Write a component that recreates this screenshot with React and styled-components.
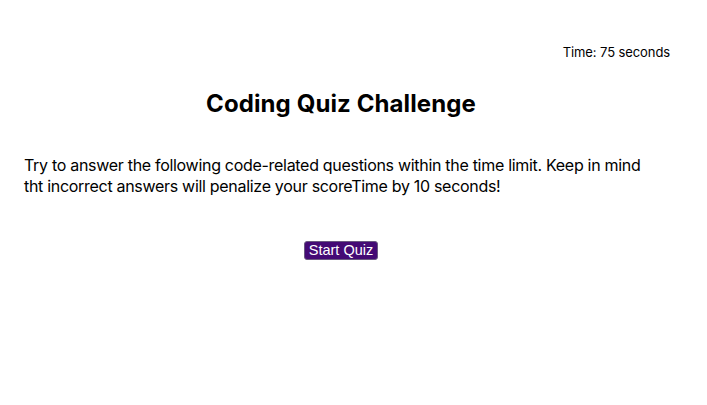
import styled, { createGlobalStyle } from 'styled-components';

const GlobalStyle = createGlobalStyle`
  body {
    margin: 0;
    background: #ffffff;
    font-family: Inter, "Noto Sans", sans-serif;
    color: #000000;
  }
`;

const Page = styled.div`
  display: flex;
  flex-direction: column;
  min-height: 405px;
  padding: 0 37px 0 24px;
  box-sizing: border-box;
`;

const TopBar = styled.header`
  display: flex;
  justify-content: flex-end;
  padding-top: 44px;
`;

const Timer = styled.div`
  font-size: 13px;
  line-height: 16px;
  letter-spacing: -0.1px;
`;

const Content = styled.main`
  margin-right: 12px;
`;

const Title = styled.h1`
  margin: 29px 0 0;
  text-align: center;
  font-size: 24px;
  font-weight: 700;
  line-height: 30px;
  letter-spacing: 0.1px;
`;

const Intro = styled.p`
  margin: 36px 0 0;
  font-size: 16px;
  line-height: 21px;
  letter-spacing: -0.3px;
  max-width: 625px;
`;

const Actions = styled.div`
  display: flex;
  justify-content: center;
  margin-top: 44px;
`;

const StartButton = styled.button`
  font-family: "Liberation Sans", Arial, sans-serif;
  font-size: 14.5px;
  line-height: 15px;
  padding: 1px 4px;
  background: #440a75;
  color: #ffffff;
  border: 1px solid #6a5a80;
  border-radius: 3px;
  cursor: pointer;
`;

export default function App() {
  return (
    <>
      <GlobalStyle />
      <Page>
        <TopBar>
          <Timer>Time: 75 seconds</Timer>
        </TopBar>
        <Content>
          <Title>Coding Quiz Challenge</Title>
          <Intro>
            Try to answer the following code-related questions within the time limit. Keep in mind
            tht incorrect answers will penalize your scoreTime by 10 seconds!
          </Intro>
          <Actions>
            <StartButton>Start Quiz</StartButton>
          </Actions>
        </Content>
      </Page>
    </>
  );
}
